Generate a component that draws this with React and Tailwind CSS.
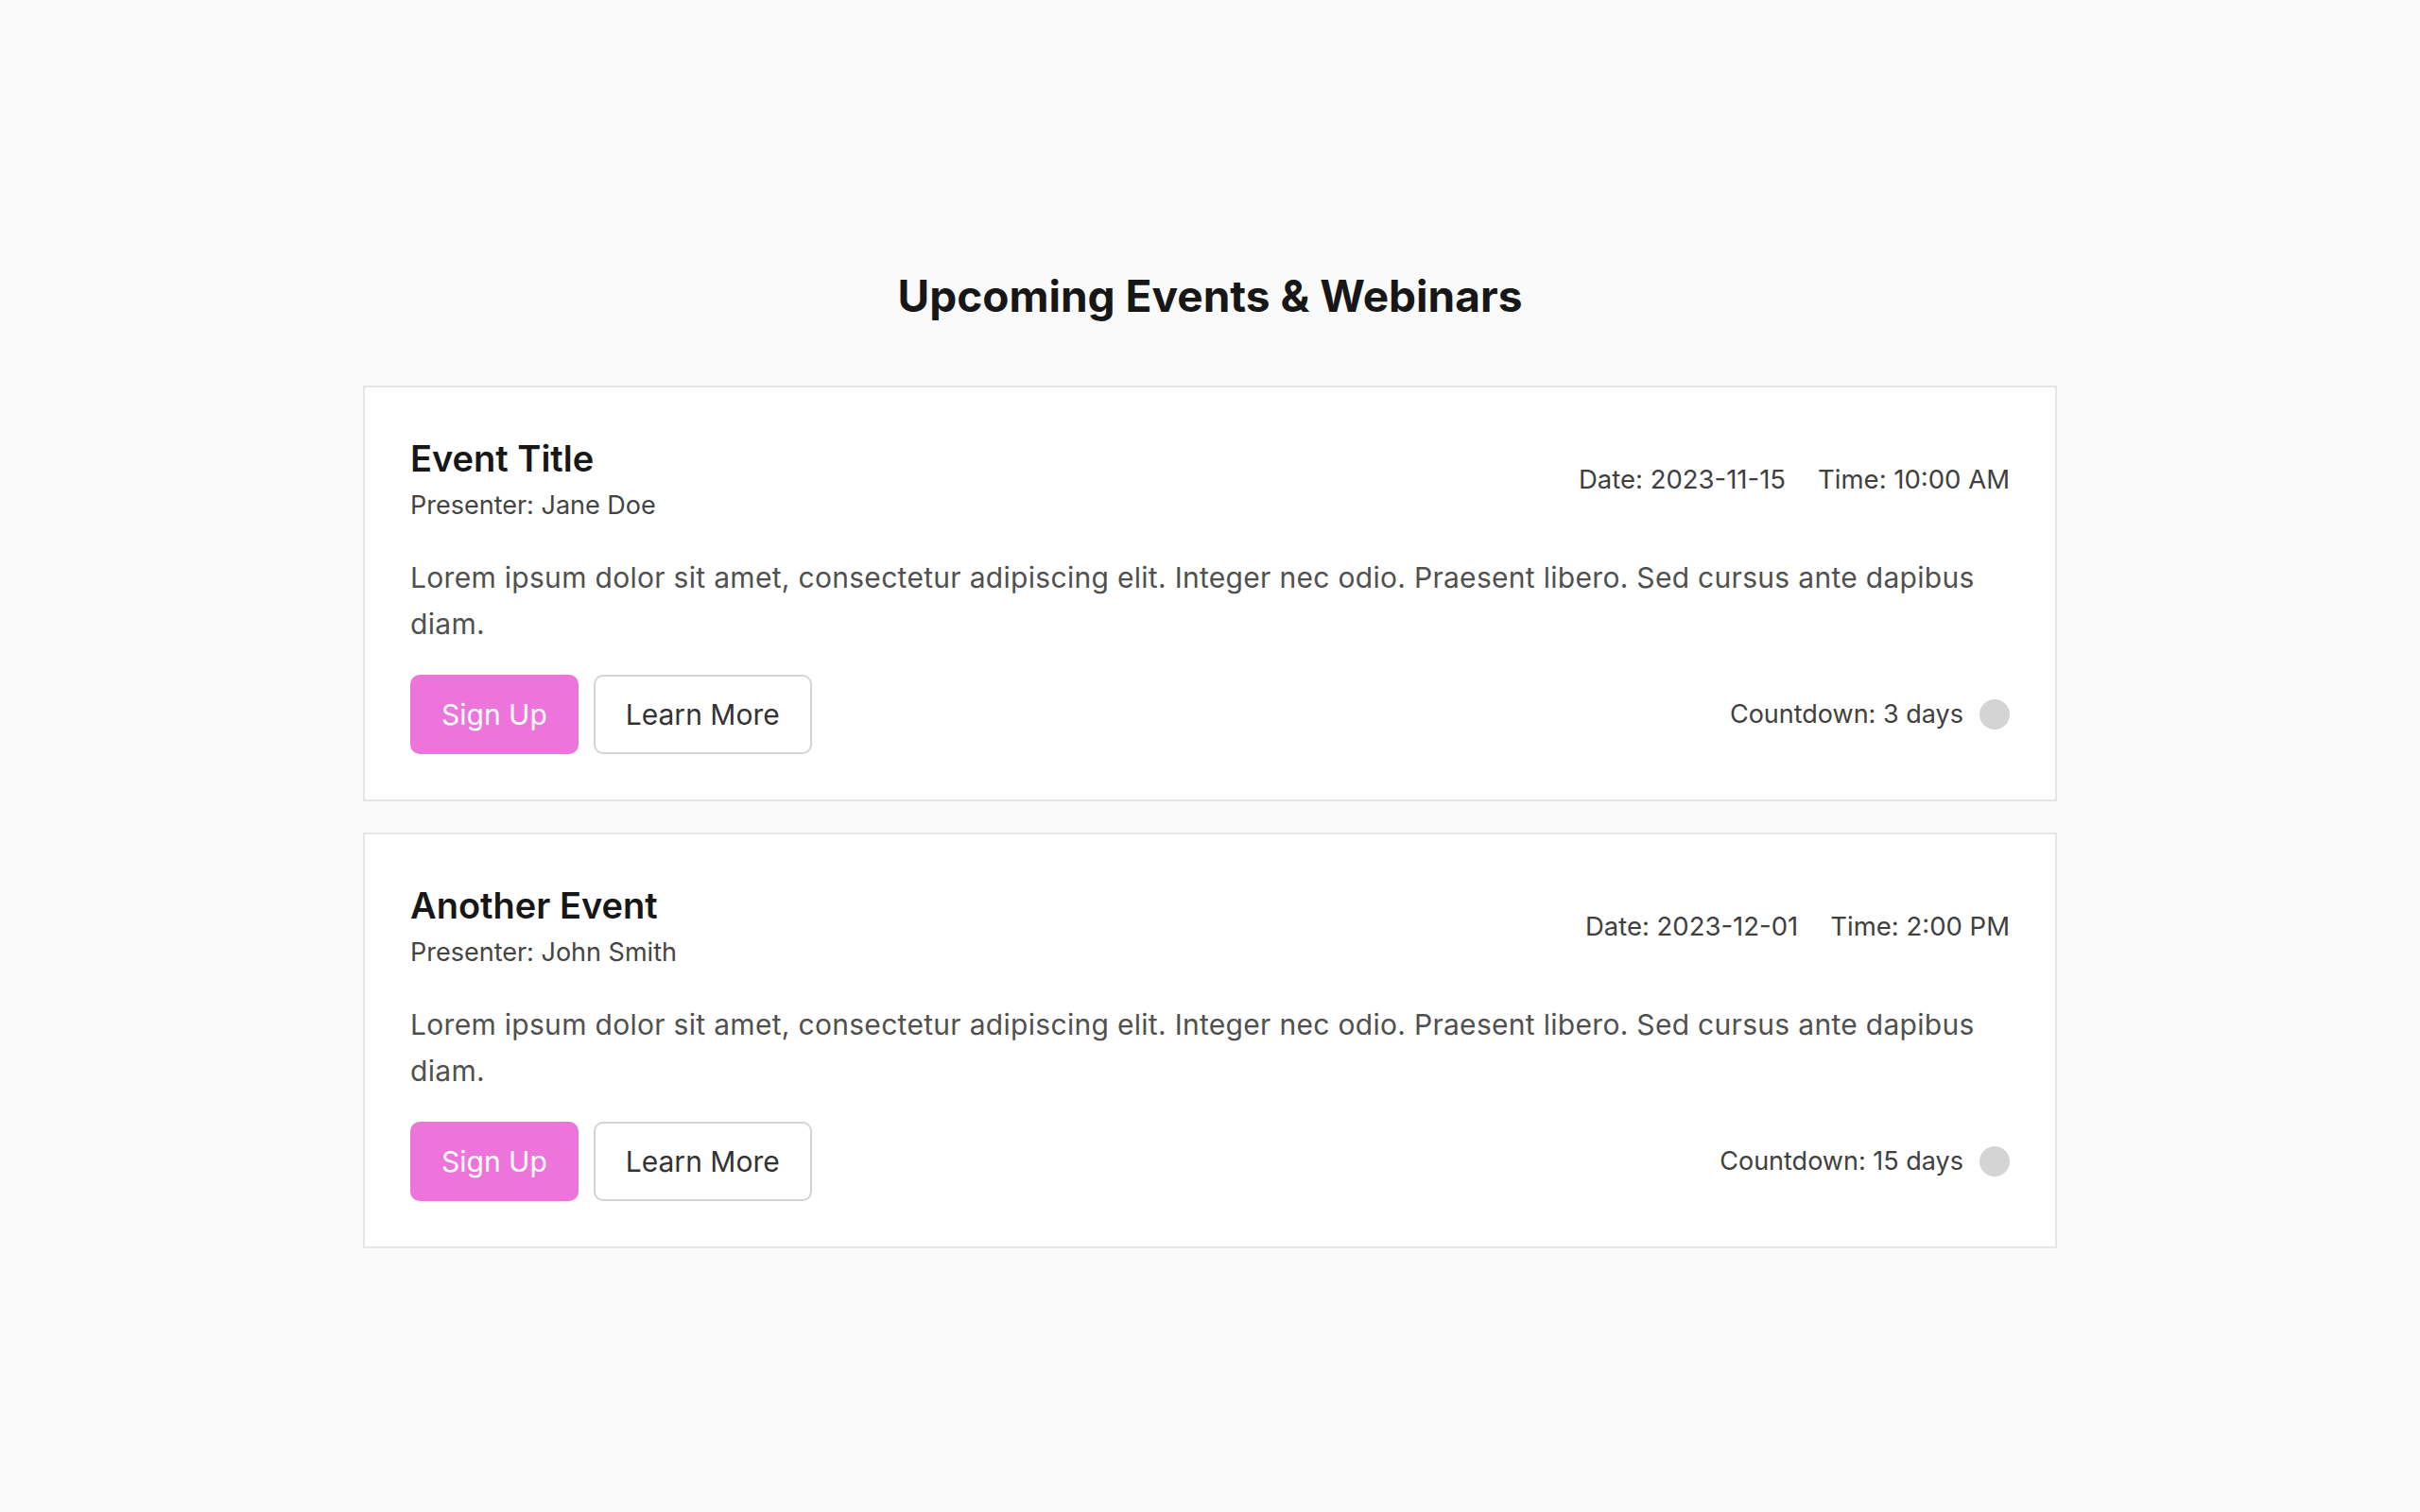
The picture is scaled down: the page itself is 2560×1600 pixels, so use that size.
import React from "react";

const events = [
    {
        id: 1,
        title: "Event Title",
        presenter: "Jane Doe",
        date: "2023-11-15",
        time: "10:00 AM",
        countdown: "3 days",
    },
    {
        id: 2,
        title: "Another Event",
        presenter: "John Smith",
        date: "2023-12-01",
        time: "2:00 PM",
        countdown: "15 days",
    },
];

const blurb =
    "Lorem ipsum dolor sit amet, consectetur adipiscing elit. Integer nec odio. Praesent libero. Sed cursus ante dapibus diam.";

function EventCard({ ev }) {
    return (
        <div className="border-2 border-[#e5e5e5] bg-white p-[48px]">
            {/* Header: title + presenter on the left, date/time on the right */}
            <div className="flex items-start justify-between">
                <div>
                    <h2 className="text-[38px] font-semibold leading-[55px] text-[#171717]">{ev.title}</h2>
                    <p className="mt-[6px] text-[27px] leading-[32px] text-[#444444]">Presenter: {ev.presenter}</p>
                </div>
                <div className="mt-[31px] flex gap-[34px] text-[27.5px] leading-[36px] text-[#404040]">
                    <span>Date: {ev.date}</span>
                    <span>Time: {ev.time}</span>
                </div>
            </div>

            <p className="mt-[36px] text-[30px] leading-[49px] tracking-[0.3px] text-[#505050]">{blurb}</p>

            {/* Actions + countdown */}
            <div className="mt-[29px] flex items-center justify-between">
                <div className="flex gap-[16px]">
                    <button className="h-[84px] rounded-[10px] bg-[#ec74db] px-[33px] text-[30px] text-white">
                        Sign Up
                    </button>
                    <button className="h-[84px] rounded-[10px] border-2 border-[#d4d4d4] bg-white px-[32px] text-[30px] text-[#333333]">
                        Learn More
                    </button>
                </div>
                <div className="flex items-center gap-[17px] text-[27px] leading-[36px] text-[#404040]">
                    <span>Countdown: {ev.countdown}</span>
                    <span className="h-[32px] w-[32px] rounded-full bg-[#d4d4d4]" />
                </div>
            </div>
        </div>
    );
}

export default function App() {
    return (
        <div className="min-h-screen bg-[#fafafa] pt-[284px] pb-[120px] font-['Inter',sans-serif]">
            <h1 className="text-center text-[46px] font-bold leading-[58px] text-[#171717]">
                Upcoming Events &amp; Webinars
            </h1>

            <div className="mx-auto mt-[66px] flex w-[1792px] flex-col gap-[33px]">
                {events.map((ev) => (
                    <EventCard key={ev.id} ev={ev} />
                ))}
            </div>
        </div>
    );
}
